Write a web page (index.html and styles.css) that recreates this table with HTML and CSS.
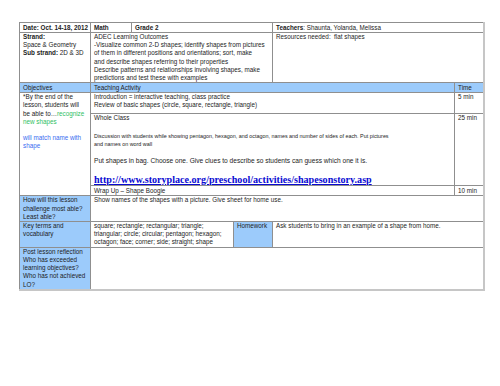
FILE: index.html
```html
<!DOCTYPE html>
<html>
<head>
<meta charset="utf-8">
<link rel="stylesheet" href="styles.css">
</head>
<body>
<div class="page">
<table class="plan">
<colgroup>
<col class="c-a"><col class="c-b"><col class="c-c"><col class="c-d"><col class="c-e"><col class="c-f">
</colgroup>
<tr class="r-head">
<td class="b nw">Date: Oct. 14-18, 2012</td>
<td class="b">Math</td>
<td class="b" colspan="2">Grade 2</td>
<td colspan="2"><span class="b">Teachers</span>: Shaunta, Yolanda, Melissa</td>
</tr>
<tr class="r-strand">
<td><span class="b">Strand:</span><br>Space &amp; Geometry<br><span class="b">Sub strand:</span> 2D &amp; 3D</td>
<td colspan="3" class="nw">ADEC Learning Outcomes<br>-Visualize common 2-D shapes; identify shapes from pictures<br>of them in different positions and orientations; sort, make<br>and describe shapes referring to their properties<br>Describe patterns and relationships involving shapes, make<br>predictions and test these with examples</td>
<td colspan="2">Resources needed:&nbsp; flat shapes</td>
</tr>
<tr class="r-blue">
<td class="blue">Objectives</td>
<td class="blue" colspan="4">Teaching Activity</td>
<td class="blue">Time</td>
</tr>
<tr class="r-intro">
<td rowspan="3" class="nw">*By the end of the<br>lesson, students will<br>be able to…<span class="green">recognize</span><br><span class="green">new shapes</span><br><br><span class="bluetext">will match name with<br>shape</span></td>
<td colspan="4" class="nw">Introduction = interactive teaching, class practice<br>Review of basic shapes (circle, square, rectangle, triangle)</td>
<td class="nw">5 min</td>
</tr>
<tr class="r-whole">
<td colspan="4" class="nw">
<div class="wc-title">Whole Class</div>
<div class="wc-p1 small">Discussion with students while showing pentagon, hexagon, and octagon, names and number of sides of each. Put pictures<br>and names on word wall</div>
<div class="wc-p2">Put shapes in bag. Choose one. Give clues to describe so students can guess which one it is.</div>
<div class="wc-link"><a href="#">http://www.storyplace.org/preschool/activities/shapesonstory.asp</a></div>
</td>
<td class="nw">25 min</td>
</tr>
<tr class="r-wrap">
<td colspan="4">Wrap Up – Shape Boogie</td>
<td class="nw">10 min</td>
</tr>
<tr class="r-how">
<td class="blue nw">How will this lesson<br>challenge most able?<br>Least able?</td>
<td colspan="5">Show names of the shapes with a picture. Give sheet for home use.</td>
</tr>
<tr class="r-key">
<td class="blue nw">Key terms and<br>vocabulary</td>
<td colspan="2" class="nw">square; rectangle; rectangular; triangle;<br>triangular; circle; circular; pentagon; hexagon;<br>octagon; face; corner; side; straight; shape</td>
<td class="blue">Homework</td>
<td colspan="2">Ask students to bring in an example of a shape from home.</td>
</tr>
<tr class="r-post">
<td class="blue nw">Post lesson reflection<br>Who has exceeded<br>learning objectives?<br>Who has not achieved<br>LO?</td>
<td colspan="5"></td>
</tr>
</table>
</div>
</body>
</html>
```

FILE: styles.css
```css
html, body {
  margin: 0;
  padding: 0;
  background: #ffffff;
}
.page {
  padding: 22px 0 0 19px;
  width: 500px;
  height: 386px;
  box-sizing: border-box;
}
.plan {
  border-collapse: collapse;
  table-layout: fixed;
  width: 464px;
  font-family: "Liberation Sans", Arial, sans-serif;
  font-size: 6.3px;
  line-height: 8.15px;
  color: #1c1c1c;
  border-top: 1px solid #b5b5b5;
  border-left: 1px solid #8a8a8a;
  border-right: 2px solid #c6c6c6;
  border-bottom: 2px solid #c6c6c6;
}
.c-a { width: 71px; }
.c-b { width: 41px; }
.c-c { width: 102px; }
.c-d { width: 39px; }
.c-e { width: 182px; }
.c-f { width: 29px; }
.plan td {
  border: 1px solid #8f8f8f;
  padding: 0 1px 0 3px;
  vertical-align: top;
  overflow: hidden;
}
.nw { white-space: nowrap; }
.b { font-weight: bold; }
.blue { background: #9ccbfb; }
.green { color: #2fc064; }
.bluetext { color: #3a6cf0; }
.small { font-size: 5.4px; line-height: 7.6px; }
.r-head { height: 10px; }
.r-head td { padding-top: 1px; }
.r-strand { height: 50px; }
.r-blue { height: 10px; }
.r-blue td { padding-top: 1px; }
.r-intro { height: 21px; }
.r-whole { height: 72px; }
.r-wrap { height: 10px; }
.r-wrap td { padding-top: 1px; }
.r-how { height: 25px; }
.r-key { height: 26px; }
.r-post { height: 42px; }
.wc-title { margin-top: 0; }
.wc-p1 { margin-top: 11px; }
.wc-p2 { margin-top: 8.7px; font-size: 6.6px; }
.wc-link {
  margin-top: 9.5px;
  line-height: 10px;
  font-family: "Liberation Serif", "Times New Roman", serif;
  font-size: 10.1px;
  font-weight: bold;
}
.wc-link a {
  color: #0a0ad2;
  text-decoration: underline;
}
```
